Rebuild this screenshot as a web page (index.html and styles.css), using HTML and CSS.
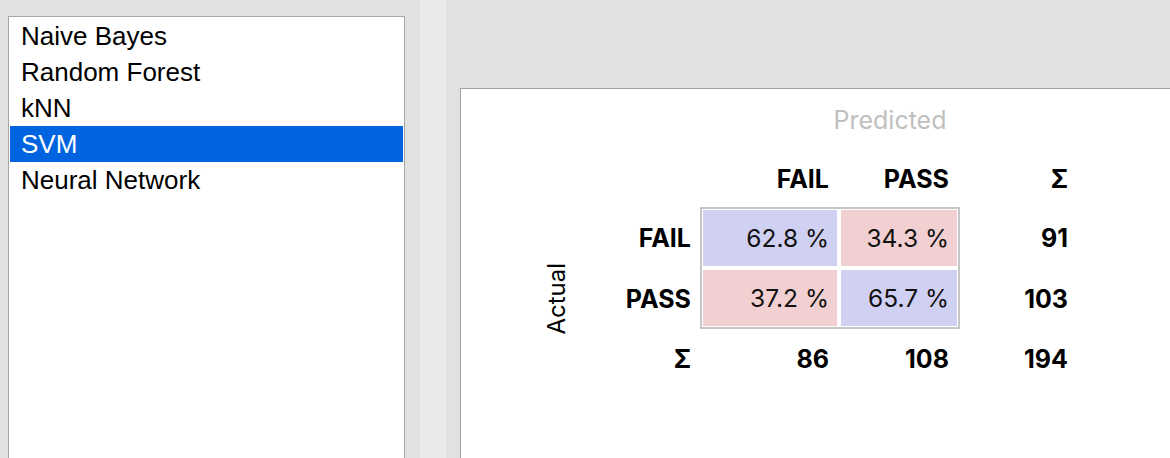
FILE: index.html
```
<!DOCTYPE html>
<html>
<head>
<meta charset="utf-8">
<link rel="stylesheet" href="styles.css">
</head>
<body>
<div class="app">
  <div class="left">
    <div class="listbox">
      <div class="item">Naive Bayes</div>
      <div class="item">Random Forest</div>
      <div class="item">kNN</div>
      <div class="item selected">SVM</div>
      <div class="item">Neural Network</div>
    </div>
  </div>
  <div class="splitter"></div>
  <div class="right">
    <div class="panel">
      <div class="matrix">
        <div class="predicted">Predicted</div>

        <div class="hdr c3">FAIL</div>
        <div class="hdr c4">PASS</div>
        <div class="hdr c5">Σ</div>

        <div class="actual">Actual</div>

        <div class="rlabel r3">FAIL</div>
        <div class="rlabel r4">PASS</div>

        <div class="box">
          <div class="cell diag">62.8 %</div>
          <div class="cell off">34.3 %</div>
          <div class="cell off">37.2 %</div>
          <div class="cell diag">65.7 %</div>
        </div>

        <div class="sum r3">91</div>
        <div class="sum r4">103</div>

        <div class="rlabel r5">Σ</div>
        <div class="total c3">86</div>
        <div class="total c4">108</div>
        <div class="total c5">194</div>
      </div>
    </div>
  </div>
</div>
</body>
</html>
```
FILE: styles.css
```
html, body {
  margin: 0;
  padding: 0;
}
body {
  width: 1170px;
  height: 458px;
  overflow: hidden;
  background: #e1e1e1;
}
.app {
  display: flex;
  height: 458px;
  overflow: hidden;
  background: #e1e1e1;
}
.left {
  width: 420px;
  flex: none;
  box-sizing: border-box;
  padding: 16px 15px 0 8px;
}
.listbox {
  height: 470px;
  box-sizing: border-box;
  background: #fff;
  border: 1px solid #a6a6a6;
  padding: 1px;
  font-family: "Liberation Sans", Arial, sans-serif;
  font-size: 26px;
  color: #000;
}
.item {
  height: 36px;
  line-height: 36px;
  padding-left: 11px;
  white-space: nowrap;
}
.item.selected {
  background: #0064e0;
  color: #fff;
}
.splitter {
  width: 26px;
  flex: none;
  background: #eaeaea;
}
.right {
  flex: 1;
  box-sizing: border-box;
  padding: 88px 0 0 14px;
}
.panel {
  height: 400px;
  background: #fff;
  border-top: 1px solid #a3a3a3;
  border-left: 1px solid #a3a3a3;
}
.matrix {
  display: grid;
  grid-template-columns: 190px 49px 139px 121px 108px;
  grid-template-rows: 62px 56px 61px 61px 60px;
  font-family: Inter, "Noto Sans", sans-serif;
  font-size: 25px;
  color: #000;
}
.predicted {
  grid-column: 3 / 6;
  grid-row: 1;
  align-self: center;
  text-align: center;
  padding-left: 12px;
  color: #bfbfbf;
}
.hdr {
  grid-row: 2;
  align-self: center;
  text-align: right;
  font-weight: 700;
}
.c3 { grid-column: 3; padding-right: 10px; }
.c4 { grid-column: 4; padding-right: 11px; }
.c5 { grid-column: 5; }
.actual {
  grid-column: 1;
  grid-row: 4;
  justify-self: center;
  align-self: center;
  writing-mode: vertical-rl;
  transform: rotate(180deg);
  white-space: nowrap;
  font-size: 24px;
}
.rlabel {
  grid-column: 2;
  align-self: center;
  justify-self: end;
  padding-right: 9px;
  font-weight: 700;
  white-space: nowrap;
}
.r3 { grid-row: 3; }
.r4 { grid-row: 4; }
.r5 { grid-row: 5; }
.box {
  grid-column: 3 / 5;
  grid-row: 3 / 5;
  border: 2px solid #c6c6c6;
  padding: 1px;
  display: grid;
  grid-template-columns: 134px 116px;
  grid-template-rows: 56px 56px;
  gap: 4px;
}
.cell {
  display: flex;
  align-items: center;
  justify-content: flex-end;
  padding-right: 8px;
  font-size: 24.5px;
  color: #111;
}
.cell.diag { background: #d0d0f2; }
.cell.off { background: #f2cfd0; }
.sum {
  grid-column: 5;
  align-self: center;
  text-align: right;
  font-weight: 700;
}
.total {
  grid-row: 5;
  align-self: center;
  text-align: right;
  font-weight: 700;
}
```
